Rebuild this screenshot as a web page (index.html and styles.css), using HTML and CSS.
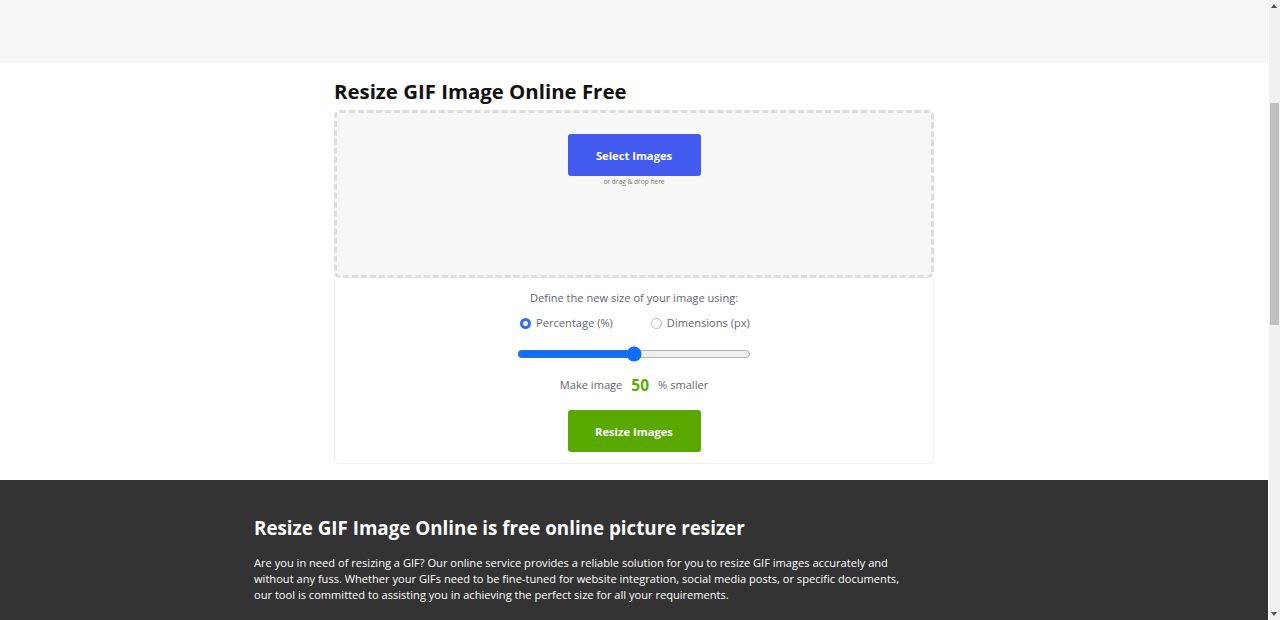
FILE: index.html
```html
<!DOCTYPE html>
<html lang="en">
<head>
  <meta charset="UTF-8" />
  <meta name="viewport" content="width=device-width, initial-scale=1.0"/>
  <title>Resize GIF Image Online Free</title>
  <link rel="stylesheet" href="styles.css">
</head>
<body>
  <header class="topbar"></header>

  <main class="tool">
    <h1 class="tool-title">Resize GIF Image Online Free</h1>

    <div class="dropzone">
      <button type="button" class="select-btn">Select Images</button>
      <div class="drop-hint">or drag &amp; drop here</div>
    </div>

    <div class="options">
      <div class="options-label">Define the new size of your image using:</div>

      <div class="radio-row">
        <label class="radio">
          <input type="radio" name="mode" checked />
          <span>Percentage (%)</span>
        </label>
        <label class="radio">
          <input type="radio" name="mode" />
          <span>Dimensions (px)</span>
        </label>
      </div>

      <input type="range" class="slider" min="0" max="100" value="50" />

      <div class="make-line">
        <span>Make image</span>
        <span class="percent">50</span>
        <span>% smaller</span>
      </div>

      <button type="button" class="resize-btn">Resize Images</button>
    </div>
  </main>

  <section class="about">
    <div class="about-inner">
      <h2>Resize GIF Image Online is free online picture resizer</h2>
      <p>Are you in need of resizing a GIF? Our online service provides a reliable solution for you to resize GIF images accurately and without any fuss. Whether your GIFs need to be fine-tuned for website integration, social media posts, or specific documents, our tool is committed to assisting you in achieving the perfect size for all your requirements.</p>
    </div>
  </section>

  <!-- window scrollbar as seen in the screenshot -->
  <div class="scrollbar" aria-hidden="true">
    <span class="arrow up"></span>
    <span class="thumb"></span>
    <span class="arrow down"></span>
  </div>
</body>
</html>
```

FILE: styles.css
```css
* {
  margin: 0;
  padding: 0;
  box-sizing: border-box;
}

html, body {
  height: 100%;
  overflow: hidden;
}

body {
  font-family: 'Open Sans', 'Noto Sans', sans-serif;
  background-color: #fff;
  color: #222;
  padding-right: 12px;
}

.topbar {
  height: 63px;
  background-color: #f7f7f7;
}

.tool {
  width: 600px;
  margin: 0 auto;
  padding: 14px 0 16px;
}

.tool-title {
  font-size: 20.4px;
  font-weight: 700;
  color: #111;
  line-height: 28px;
  margin-bottom: 5px;
}

.dropzone {
  height: 168px;
  background-color: #f7f7f7;
  border: 3px dashed #dedede;
  border-radius: 6px;
  display: flex;
  flex-direction: column;
  align-items: center;
  padding-top: 21px;
}

.select-btn {
  width: 133px;
  height: 42px;
  background-color: #445bf0;
  color: #fff;
  border: none;
  border-radius: 3px;
  font-family: inherit;
  font-size: 11.2px;
  font-weight: 700;
}

.drop-hint {
  font-size: 6.6px;
  color: #777;
  line-height: 10px;
  margin-top: 1px;
}

.options {
  border: 1px solid #eee;
  border-top: none;
  border-radius: 0 0 5px 5px;
  display: flex;
  flex-direction: column;
  align-items: center;
  padding: 12px 0 11px;
}

.options-label {
  font-size: 11.1px;
  color: #5f6673;
  line-height: 16px;
}

.radio-row {
  display: flex;
  gap: 38px;
  margin-top: 9px;
  margin-left: 2px;
}

.radio {
  display: flex;
  align-items: center;
  gap: 5px;
  font-size: 11.1px;
  line-height: 16px;
  color: #5f6673;
}

.radio input {
  appearance: none;
  width: 11px;
  height: 11px;
  margin: 0;
  border: 1px solid #b5b9c0;
  border-radius: 50%;
  background-color: #fff;
}

.radio input:checked {
  border: 3px solid #2f6ef6;
}

.slider {
  width: 234px;
  margin-top: 17px;
  accent-color: #0d6efd;
  height: 12px;
}

.make-line {
  display: flex;
  align-items: center;
  gap: 9px;
  margin-top: 14px;
  font-size: 11.1px;
  line-height: 22px;
  color: #5f6673;
}

.percent {
  font-size: 15.5px;
  font-weight: 700;
  color: #5aab00;
}

.resize-btn {
  width: 133px;
  height: 42px;
  margin-top: 14px;
  background-color: #58a800;
  color: #fff;
  border: none;
  border-radius: 3px;
  font-family: inherit;
  font-size: 11.2px;
  font-weight: 700;
}

.about {
  background-color: #333;
  color: #fff;
  padding: 34px 0 40px;
}

.about-inner {
  width: 760px;
  margin: 0 auto;
}

.about h2 {
  font-size: 18.8px;
  font-weight: 700;
  line-height: 28px;
  margin-bottom: 13px;
}

.about p {
  font-size: 11.1px;
  line-height: 16px;
  max-width: 650px;
}

.scrollbar {
  position: fixed;
  top: 0;
  right: 0;
  width: 11px;
  height: 100%;
  background-color: #f1f1f1;
}

.thumb {
  position: absolute;
  top: 103px;
  left: 1px;
  width: 9px;
  height: 222px;
  background-color: #c1c1c1;
}

.arrow {
  position: absolute;
  left: 2px;
  width: 0;
  height: 0;
  border-left: 3.5px solid transparent;
  border-right: 3.5px solid transparent;
}

.arrow.up {
  top: 4px;
  border-bottom: 4px solid #505050;
}

.arrow.down {
  bottom: 4px;
  border-top: 4px solid #505050;
}
```
